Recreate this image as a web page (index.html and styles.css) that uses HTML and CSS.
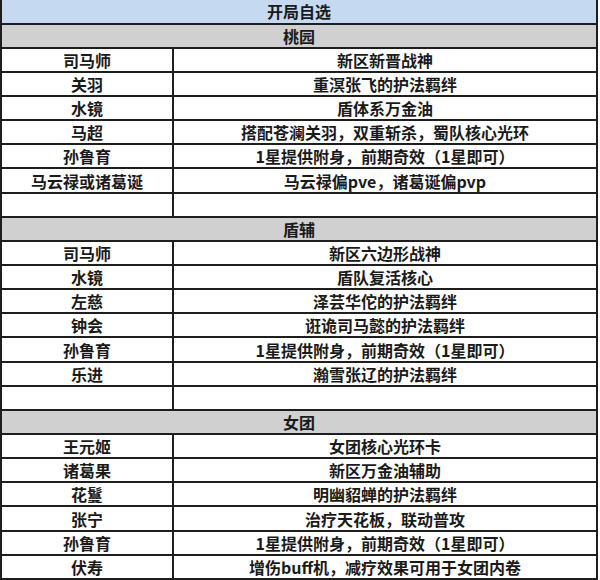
FILE: index.html
```html
<!DOCTYPE html>
<html lang="zh-CN">
<head>
<meta charset="utf-8">
<title>开局自选</title>
<link rel="stylesheet" href="styles.css">
</head>
<body>
<table class="sheet">
  <colgroup><col class="c-name"><col class="c-desc"></colgroup>
  <tbody>
    <tr class="title"><td colspan="2">开局自选</td></tr>
    <tr class="group"><td colspan="2">桃园</td></tr>
    <tr><td>司马师</td><td>新区新晋战神</td></tr>
    <tr><td>关羽</td><td>重溟张飞的护法羁绊</td></tr>
    <tr><td>水镜</td><td>盾体系万金油</td></tr>
    <tr><td>马超</td><td>搭配苍澜关羽，双重斩杀，蜀队核心光环</td></tr>
    <tr><td>孙鲁育</td><td>1星提供附身，前期奇效（1星即可）</td></tr>
    <tr><td>马云禄或诸葛诞</td><td>马云禄偏pve，诸葛诞偏pvp</td></tr>
    <tr><td></td><td></td></tr>
    <tr class="group"><td colspan="2">盾辅</td></tr>
    <tr><td>司马师</td><td>新区六边形战神</td></tr>
    <tr><td>水镜</td><td>盾队复活核心</td></tr>
    <tr><td>左慈</td><td>泽芸华佗的护法羁绊</td></tr>
    <tr><td>钟会</td><td>诳诡司马懿的护法羁绊</td></tr>
    <tr><td>孙鲁育</td><td>1星提供附身，前期奇效（1星即可）</td></tr>
    <tr><td>乐进</td><td>瀚雪张辽的护法羁绊</td></tr>
    <tr><td></td><td></td></tr>
    <tr class="group"><td colspan="2">女团</td></tr>
    <tr><td>王元姬</td><td>女团核心光环卡</td></tr>
    <tr><td>诸葛果</td><td>新区万金油辅助</td></tr>
    <tr><td>花鬘</td><td>明幽貂蝉的护法羁绊</td></tr>
    <tr><td>张宁</td><td>治疗天花板，联动普攻</td></tr>
    <tr><td>孙鲁育</td><td>1星提供附身，前期奇效（1星即可）</td></tr>
    <tr><td>伏寿</td><td>增伤buff机，减疗效果可用于女团内卷</td></tr>
  </tbody>
</table>
</body>
</html>
```
FILE: styles.css
```css
html, body {
  margin: 0;
  padding: 0;
  background: #ffffff;
}

.sheet {
  border-collapse: collapse;
  table-layout: fixed;
  width: 598px;
  margin: -1px 0 0 0;
  font-family: "Noto Sans CJK SC", "Noto Sans", sans-serif;
  font-size: 16px;
  font-weight: bold;
  color: #1a1a1a;
}

.c-name { width: 172px; }

.sheet td {
  border: 2px solid #1e1e1e;
  height: 24.15px;
  padding: 0;
  box-sizing: border-box;
  text-align: center;
  vertical-align: middle;
  line-height: 20px;
  white-space: nowrap;
  overflow: hidden;
}

.sheet tr.title td {
  background: #c5d9f1;
  border-top: 1px solid #b8c4d2;
}

.sheet tr.group td {
  background: #d0d0d0;
}
```
